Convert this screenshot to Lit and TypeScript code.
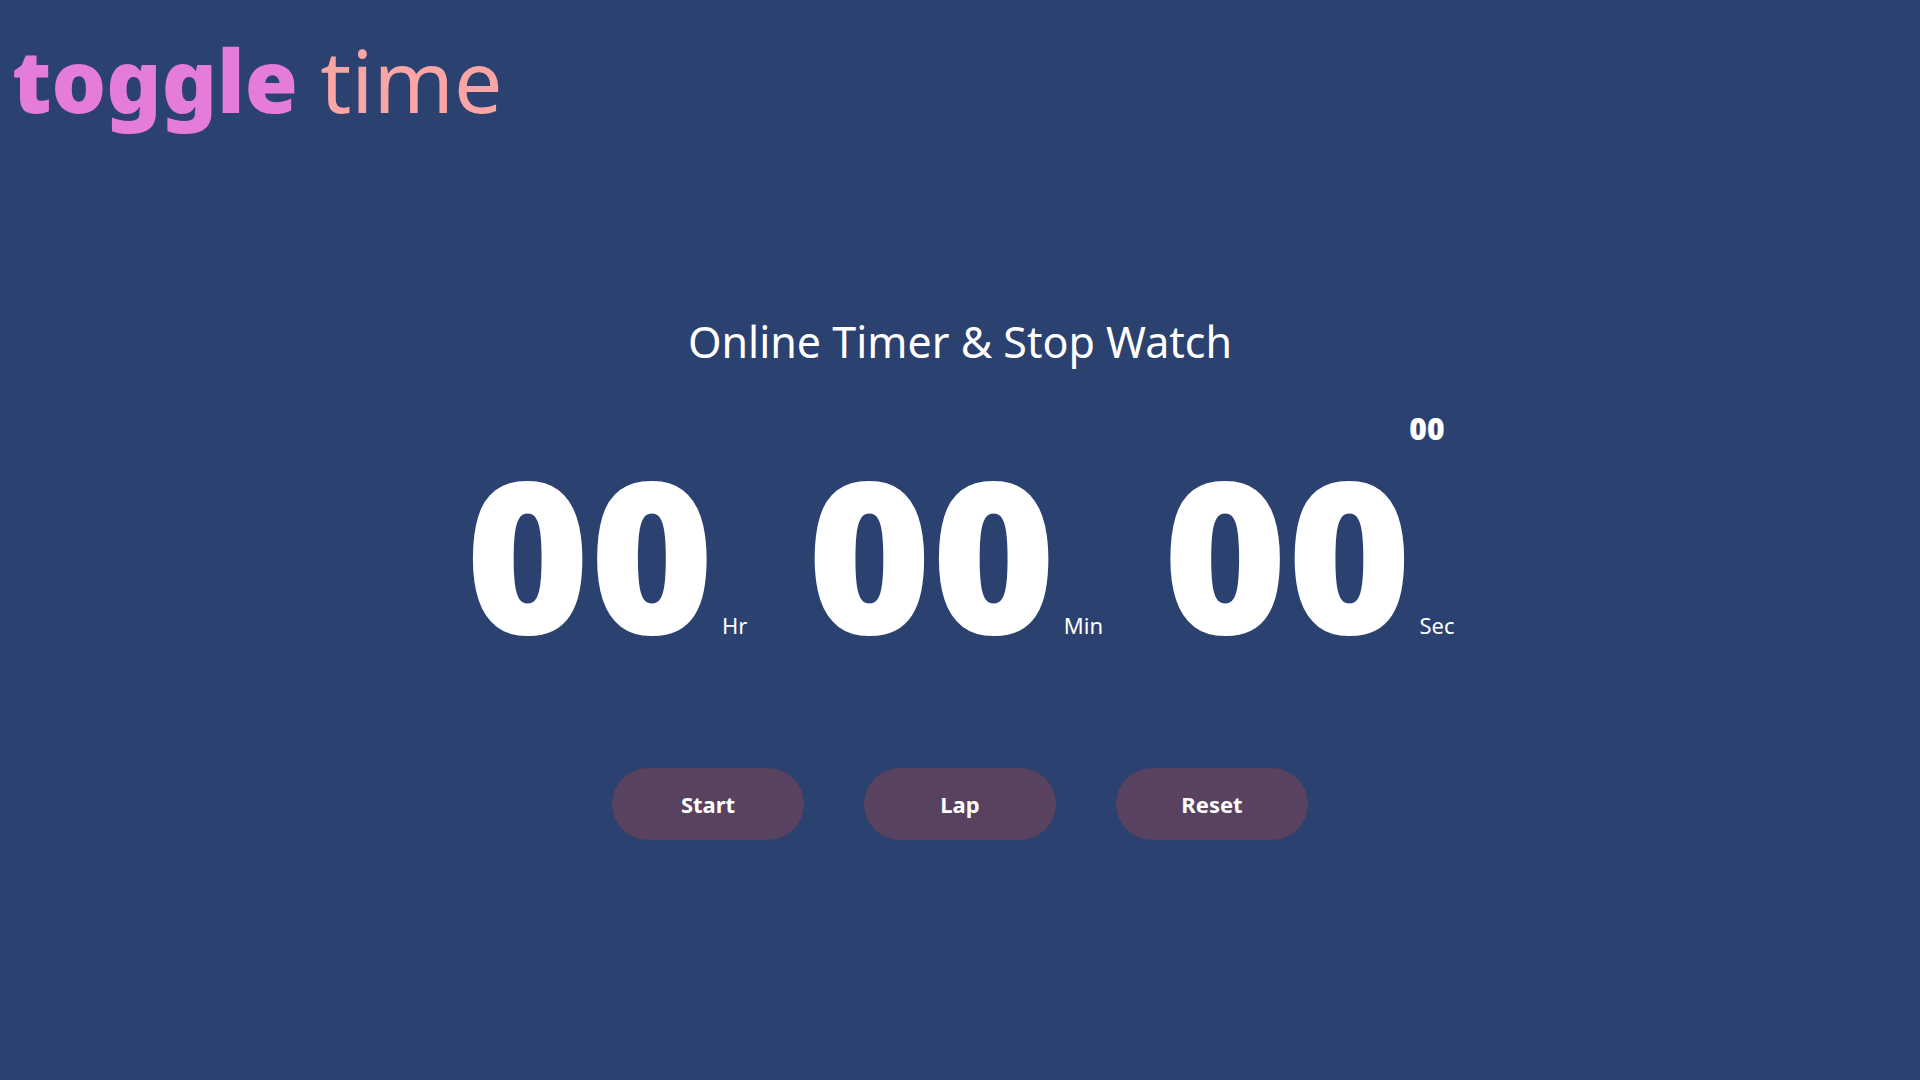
import { LitElement, html, css } from "lit";
import { customElement, state } from "lit/decorators.js";

const pad = (n: number) => String(n).padStart(2, "0");

@customElement("app-root")
export class AppRoot extends LitElement {
  static styles = css`
    :host {
      display: block;
      box-sizing: border-box;
      min-height: 100vh;
      background: #2b4170;
      color: #fff;
      font-family: "Noto Sans", "Open Sans", sans-serif;
    }
    .brand {
      margin: 0;
      padding: 20px 12px;
      font-size: 86px;
      line-height: 120px;
      font-weight: 400;
      color: #fca5a5;
    }
    .brand-strong {
      font-weight: 900;
      color: #e57cd9;
    }
    .main {
      display: flex;
      flex-direction: column;
      align-items: center;
      padding-top: 152px;
    }
    .title {
      margin: 0;
      font-size: 43px;
      line-height: 60px;
      font-weight: 400;
    }
    .clock {
      display: flex;
      align-items: flex-end;
      gap: 60px;
      margin-top: 37px;
    }
    .unit {
      display: flex;
      flex-direction: column;
    }
    .reading {
      display: flex;
      align-items: baseline;
      gap: 8px;
    }
    .digits {
      font-size: 212px;
      line-height: 206px;
      font-weight: 900;
    }
    .label {
      font-size: 22px;
      line-height: 30px;
    }
    .hundredths {
      align-self: flex-end;
      padding-right: 10px;
      font-size: 30px;
      line-height: 40px;
      font-weight: 900;
    }
    .actions {
      display: flex;
      gap: 60px;
      margin-top: 113px;
    }
    .action {
      width: 192px;
      height: 72px;
      padding: 0;
      border: 0;
      border-radius: 36px;
      background: #58425f;
      color: inherit;
      font-family: inherit;
      font-size: 22px;
      line-height: 32px;
      font-weight: 700;
      cursor: pointer;
    }
  `;

  @state() private elapsed = 0;
  private timer?: number;
  private startedAt = 0;

  private start() {
    if (this.timer !== undefined) return;
    this.startedAt = Date.now() - this.elapsed;
    this.timer = window.setInterval(() => {
      this.elapsed = Date.now() - this.startedAt;
    }, 10);
  }

  private lap() {
    this.dispatchEvent(new CustomEvent("lap", { detail: this.elapsed }));
  }

  private reset() {
    window.clearInterval(this.timer);
    this.timer = undefined;
    this.elapsed = 0;
  }

  disconnectedCallback() {
    super.disconnectedCallback();
    window.clearInterval(this.timer);
    this.timer = undefined;
  }

  private reading(value: number, label: string) {
    return html`<div class="reading">
      <span class="digits">${pad(value)}</span><span class="label">${label}</span>
    </div>`;
  }

  render() {
    const seconds = Math.floor(this.elapsed / 1000);
    return html`
      <header>
        <h1 class="brand"><span class="brand-strong">toggle</span> time</h1>
      </header>
      <main class="main">
        <h2 class="title">Online Timer &amp; Stop Watch</h2>
        <div class="clock" role="timer">
          <div class="unit">${this.reading(Math.floor(seconds / 3600), "Hr")}</div>
          <div class="unit">${this.reading(Math.floor(seconds / 60) % 60, "Min")}</div>
          <div class="unit">
            <span class="hundredths">${pad(Math.floor(this.elapsed / 10) % 100)}</span>
            ${this.reading(seconds % 60, "Sec")}
          </div>
        </div>
        <div class="actions">
          <button class="action" type="button" @click=${this.start}>Start</button>
          <button class="action" type="button" @click=${this.lap}>Lap</button>
          <button class="action" type="button" @click=${this.reset}>Reset</button>
        </div>
      </main>
    `;
  }
}
